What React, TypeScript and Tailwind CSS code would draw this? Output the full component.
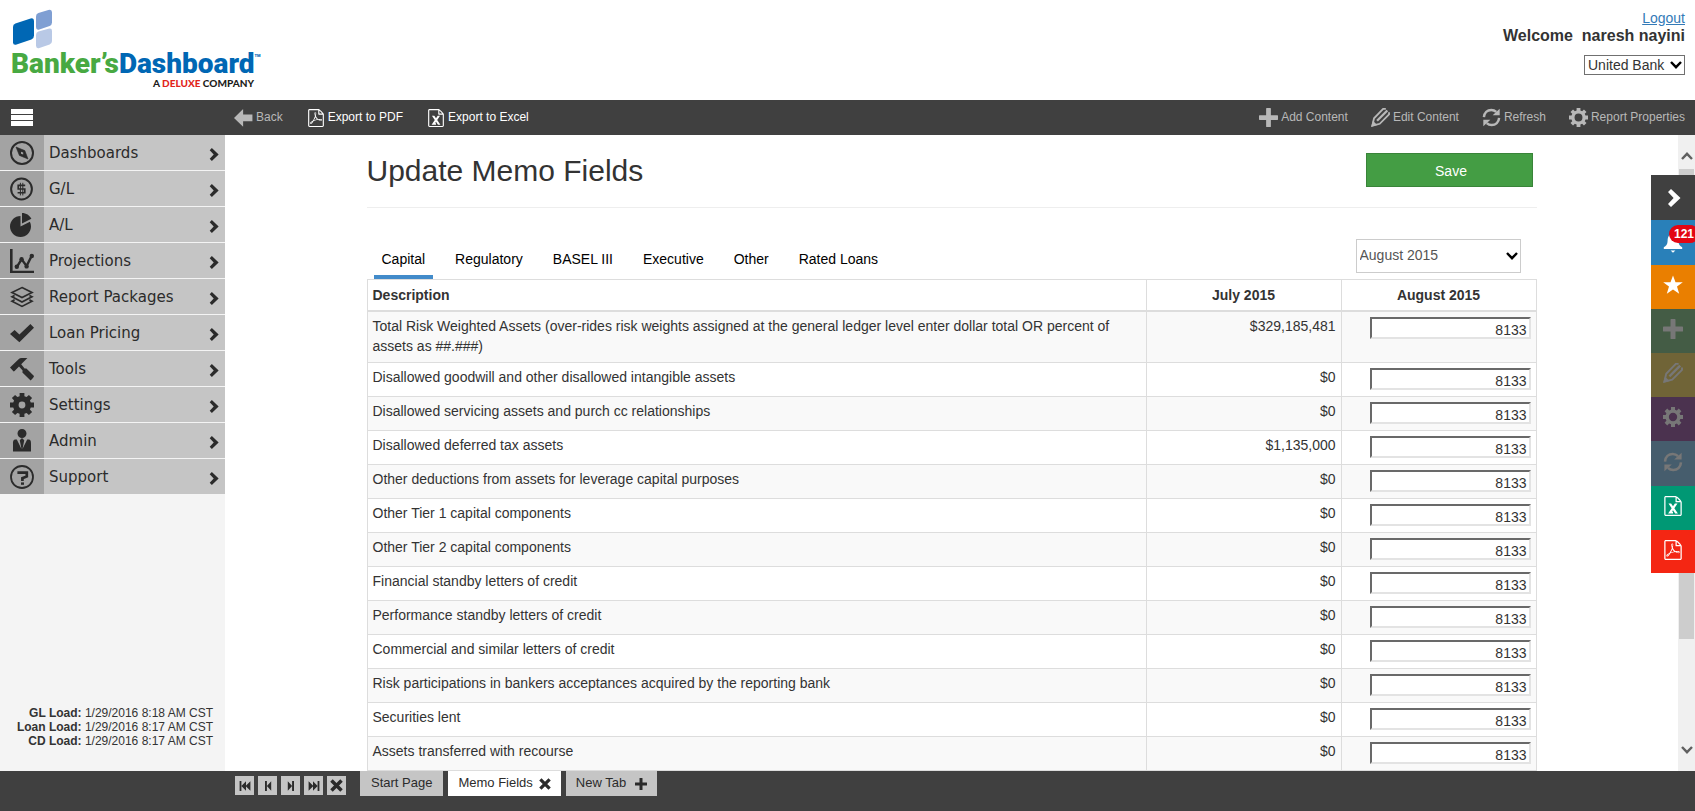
import type { ReactNode } from "react";
import { ImPieChart, ImUserTie, ImFilePdf, ImFileExcel, ImPlus } from "react-icons/im";

type IconProps = { className?: string };

function CompassIcon({ className }: IconProps) {
  return (
    <svg viewBox="0 0 24 24" className={className} fill="none" stroke="currentColor">
      <circle cx="12" cy="12" r="11" strokeWidth="2" />
      <path d="M6 6 L14.8 9.6 L18 18 L9.4 14.4 Z" fill="currentColor" strokeWidth="0.6" />
      <path d="M11 10.8 L13.2 11.4 L13.2 13.4 L11 12.8 Z" fill="#a3a3a3" stroke="none" />
    </svg>
  );
}

function DollarIcon({ className }: IconProps) {
  return (
    <svg viewBox="0 0 24 24" className={className} fill="none" stroke="currentColor">
      <circle cx="11.5" cy="12" r="10.4" strokeWidth="2" />
      <path d="M15.2 8.4 H8.2 V12 H14.8 V15.8 H7.6" strokeWidth="1.6" />
      <path d="M10.4 5.8 V18.4 M12.8 5.8 V18.4" strokeWidth="1" />
    </svg>
  );
}

function TrendIcon({ className }: IconProps) {
  return (
    <svg viewBox="0 0 24 24" className={className} fill="none" stroke="currentColor">
      <path d="M1.3 0 V23 H24" strokeWidth="2.6" />
      <path d="M7 17.6 L11.6 10.4 L16.6 17 L21.6 7" strokeWidth="2.4" />
      <g fill="currentColor" stroke="none">
        <circle cx="6.8" cy="17.8" r="2.2" />
        <circle cx="11.6" cy="10.2" r="2.2" />
        <circle cx="16.6" cy="17.4" r="2.2" />
        <circle cx="21.8" cy="7" r="2.2" />
      </g>
    </svg>
  );
}

function LayersIcon({ className }: IconProps) {
  return (
    <svg viewBox="0 0 24 24" className={className} fill="none" stroke="currentColor" strokeWidth="1.7">
      <path d="M12 2.6 L22 7.6 L12 12.6 L2 7.6 Z" />
      <path d="M4.6 10.4 L2 11.8 L12 17 L22 11.8 L19.4 10.4" />
      <path d="M4.6 14.8 L2 16.2 L12 21.4 L22 16.2 L19.4 14.8" />
    </svg>
  );
}

function CheckIcon({ className }: IconProps) {
  return (
    <svg viewBox="0 0 24 24" className={className} fill="currentColor">
      <path d="M0 13 L4.6 9 L9.4 13.6 L20.4 3 L24 6.8 L9.4 21.2 Z" />
    </svg>
  );
}

function HammerIcon({ className }: IconProps) {
  return (
    <svg viewBox="0 0 24 24" className={className} fill="currentColor">
      <path d="M0 10.6 L8.6 2.2 Q9.8 1 11.6 1 H17.4 L11.2 7.2 L14.6 11.4 L16.4 11.6 L24 19 Q24 20.4 20.6 23.4 L12.4 15.6 L12.6 13.4 L9 9.6 L4.6 14 L3.6 14.4 Z" />
    </svg>
  );
}

function GearIcon({ className, open = false }: IconProps & { open?: boolean }) {
  const teeth =
    "M9.6 0 H14.4 V3.2 L16.6 4.1 L18.9 1.9 L22.1 5.1 L19.9 7.4 L20.8 9.6 H24 V14.4 H20.8 L19.9 16.6 L22.1 18.9 L18.9 22.1 L16.6 19.9 L14.4 20.8 V24 H9.6 V20.8 L7.4 19.9 L5.1 22.1 L1.9 18.9 L4.1 16.6 L3.2 14.4 H0 V9.6 H3.2 L4.1 7.4 L1.9 5.1 L5.1 1.9 L7.4 4.1 L9.6 3.2 Z ";
  const hole = open ? "M12 7 A5 5 0 1 0 12 17 A5 5 0 1 0 12 7 Z" : "M12 8.6 A3.4 3.4 0 1 0 12 15.4 A3.4 3.4 0 1 0 12 8.6 Z";
  return (
    <svg viewBox="0 0 24 24" className={className} fill="currentColor">
      <path fillRule="evenodd" d={teeth + hole} />
    </svg>
  );
}

function QuestionIcon({ className }: IconProps) {
  return (
    <svg viewBox="0 0 24 24" className={className} fill="none" stroke="currentColor">
      <circle cx="12" cy="12" r="11" strokeWidth="1.8" />
      <path d="M7.4 7.6 H16.8 V11.4 L12.4 13.2 V16" strokeWidth="2.7" />
      <path d="M11 17.4 h3 v2.4 h-3 Z" fill="currentColor" stroke="none" />
    </svg>
  );
}

function ChevronIcon({ className }: IconProps) {
  return (
    <svg viewBox="0 0 14 18" className={className} fill="currentColor">
      <path d="M1 3 L4 0 L13.5 9 L4 18 L1 15 L6.6 9 Z" />
    </svg>
  );
}

function CaretIcon({ className }: IconProps) {
  return (
    <svg viewBox="0 0 12 8" className={className} fill="none" stroke="currentColor" strokeWidth="2.4">
      <path d="M1 1 L6 6.2 L11 1" />
    </svg>
  );
}

function BackIcon({ className }: IconProps) {
  return (
    <svg viewBox="0 0 20 20" className={className} fill="currentColor">
      <path d="M0 10 L9.6 0.6 V6.2 H19.4 V13.4 H9.6 V19.2 Z" />
    </svg>
  );
}

function PencilIcon({ className }: IconProps) {
  return (
    <svg viewBox="0 0 20 20" className={className} fill="none" stroke="currentColor" strokeWidth="1.9">
      <path d="M15.6 0.9 H12.8 L3.2 10.8 L1.4 18.6 L9.2 16.6 L19 6.8 V4.6" />
      <path d="M17.2 2.6 L6.4 13.4" strokeWidth="2.4" />
      <path d="M2 13.4 L6.6 18 L0.2 19.8 Z" fill="currentColor" stroke="none" />
    </svg>
  );
}

function RefreshIcon({ className }: IconProps) {
  return (
    <svg viewBox="0 0 20 20" className={className} fill="none" stroke="currentColor" strokeWidth="2.6">
      <path d="M2 9.6 C2.4 4.8 5.6 2 9.8 2 C12 2 13.6 2.8 15 4.2" />
      <path d="M18 10.4 C17.6 15.2 14.4 18 10.2 18 C8 18 6.4 17.2 5 15.8" />
      <path d="M18.6 0.8 V7.6 H11.2 Z" fill="currentColor" stroke="none" />
      <path d="M1.4 19.2 V12.4 H8.8 Z" fill="currentColor" stroke="none" />
    </svg>
  );
}

function StarIcon({ className }: IconProps) {
  return (
    <svg viewBox="0 0 20 20" className={className} fill="currentColor">
      <path d="M10 0.4 L12.5 7.2 H19.8 L14 11.6 L16.2 18.8 L10 14.6 L3.8 18.8 L6 11.6 L0.2 7.2 H7.5 Z" />
    </svg>
  );
}

function BellIcon({ className }: IconProps) {
  return (
    <svg viewBox="0 0 20 20" className={className} fill="currentColor">
      <path d="M10 1 C14 1 15.4 4 15.4 8 C15.4 11.6 17 13 19.2 14.2 V16 H0.8 V14.2 C3 13 4.6 11.6 4.6 8 C4.6 4 6 1 10 1 Z M7.6 17.4 H12.4 L10 19.8 Z" />
    </svg>
  );
}

function CrossIcon({ className }: IconProps) {
  return (
    <svg viewBox="0 0 14 14" className={className} stroke="currentColor" strokeWidth="3.8">
      <path d="M1.6 1.6 L12.4 12.4 M12.4 1.6 L1.6 12.4" />
    </svg>
  );
}

function SkipIcon({ double = false, flip = false }: { double?: boolean; flip?: boolean }) {
  return (
    <svg viewBox="0 0 12 10" className={flip ? "h-[10px] w-3 -scale-x-100" : "h-[10px] w-3"} fill="currentColor">
      {double ? <path d="M0.6 0 h1.8 v10 h-1.8 Z M2.4 5 L7 0.2 V9.8 Z M6.6 5 L11.4 0.2 V9.8 Z" /> : <path d="M3 0 h1.9 v10 h-1.9 Z M4.9 5 L9.2 0.2 V9.8 Z" />}
    </svg>
  );
}

function Logo() {
  return (
    <a href="#home" aria-label="Banker's Dashboard" className="block pl-[11px] pt-2">
      <svg viewBox="0 0 42 42" className="h-[42px] w-[42px]">
        <path d="M2 18.8 Q2 16.4 4.4 15.4 L19.6 10.4 Q23 9.4 23 12.8 V27.6 Q23 30.6 20.4 31.6 L5.6 36.6 Q2 37.6 2 34.2 Z" fill="#0067b4" />
        <path d="M25 8.4 Q25 6 27.4 5 L37.4 2 Q41 1 41 4.4 V14.6 Q41 17 38.6 18 L28.4 21.4 Q25 22.4 25 19 Z" fill="#7f9fd3" />
        <path d="M25 26.8 Q25 24.4 27.4 23.6 L37.4 20.8 Q41 19.8 41 23 V33 Q41 35.6 38.6 36.6 L28.4 40 Q25 41 25 37.6 Z" fill="#b9c9e6" />
      </svg>
      <div className="flex h-[26px] items-start font-[Roboto,'Liberation_Sans',sans-serif] text-[28px] leading-7 font-black">
        <span className="text-[#48a942]">Banker’s</span>
        <span className="text-[#0067b4]">Dashboard</span>
        <span className="text-[4px] leading-3 text-[#0067b4]">TM</span>
      </div>
      <p className="w-[243px] text-right font-[Lato,sans-serif] text-[10px] leading-[14px] font-black text-[#1d1d1b]">
        A <span className="text-[#e1251b]">DELUXE</span> COMPANY
      </p>
    </a>
  );
}

const menu: { label: string; icon: ReactNode }[] = [
  { label: "Dashboards", icon: <CompassIcon className="size-6" /> },
  { label: "G/L", icon: <DollarIcon className="size-6" /> },
  { label: "A/L", icon: <ImPieChart className="size-6" /> },
  { label: "Projections", icon: <TrendIcon className="size-6" /> },
  { label: "Report Packages", icon: <LayersIcon className="size-6" /> },
  { label: "Loan Pricing", icon: <CheckIcon className="size-6" /> },
  { label: "Tools", icon: <HammerIcon className="size-6" /> },
  { label: "Settings", icon: <GearIcon className="size-6" /> },
  { label: "Admin", icon: <ImUserTie className="size-6" /> },
  { label: "Support", icon: <QuestionIcon className="size-6" /> },
];

const loads = [
  ["GL Load:", "1/29/2016 8:18 AM CST"],
  ["Loan Load:", "1/29/2016 8:17 AM CST"],
  ["CD Load:", "1/29/2016 8:17 AM CST"],
];

const tabs = ["Capital", "Regulatory", "BASEL III", "Executive", "Other", "Rated Loans"];

const rows = [
  ["Total Risk Weighted Assets (over-rides risk weights assigned at the general ledger level enter dollar total OR percent of assets as ##.###)", "$329,185,481"],
  ["Disallowed goodwill and other disallowed intangible assets", "$0"],
  ["Disallowed servicing assets and purch cc relationships", "$0"],
  ["Disallowed deferred tax assets", "$1,135,000"],
  ["Other deductions from assets for leverage capital purposes", "$0"],
  ["Other Tier 1 capital components", "$0"],
  ["Other Tier 2 capital components", "$0"],
  ["Financial standby letters of credit", "$0"],
  ["Performance standby letters of credit", "$0"],
  ["Commercial and similar letters of credit", "$0"],
  ["Risk participations in bankers acceptances acquired by the reporting bank", "$0"],
  ["Securities lent", "$0"],
  ["Assets transferred with recourse", "$0"],
];

const quickActions: { label: string; style: string; icon: ReactNode }[] = [
  { label: "Collapse", style: "h-[45px] bg-[#404040] text-white pl-0.5", icon: <ChevronIcon className="h-[18px] w-[14px]" /> },
  { label: "Notifications", style: "h-[45px] bg-[#2980b9] text-white", icon: <BellIcon className="size-5" /> },
  { label: "Favorites", style: "h-11 bg-[#ea7f00] pb-1 text-white", icon: <StarIcon className="size-5" /> },
  { label: "Add content", style: "h-11 bg-[#445c45] pb-1 text-[#777]", icon: <ImPlus className="size-5" /> },
  { label: "Edit content", style: "h-11 bg-[#706437] pb-1 text-[#777]", icon: <PencilIcon className="size-5" /> },
  { label: "Report properties", style: "h-11 bg-[#4b324f] pb-1 text-[#777]", icon: <GearIcon open className="size-5" /> },
  { label: "Refresh", style: "h-[45px] bg-[#465d6d] pb-1 text-[#777]", icon: <RefreshIcon className="size-5" /> },
  { label: "Export to Excel", style: "h-11 bg-[#009874] pb-1 text-white", icon: <ImFileExcel className="size-5" /> },
  { label: "Export to PDF", style: "h-[43px] bg-[#f42613] pb-1 text-white", icon: <ImFilePdf className="size-5" /> },
];

function ToolButton({ icon, label, active = false }: { icon: ReactNode; label: string; active?: boolean }) {
  return (
    <button type="button" className={active ? "flex items-center gap-[3px] text-white" : "flex items-center gap-[3px] text-[#b8b8b8]"}>
      {icon}
      <span className="pb-0.5 leading-4">{label}</span>
    </button>
  );
}

function PagerButton({ label, children }: { label: string; children: ReactNode }) {
  return (
    <button type="button" aria-label={label} className="flex size-[19px] items-center justify-center bg-[#c5c5c5]">
      {children}
    </button>
  );
}

export default function App() {
  return (
    <div className="relative flex h-screen flex-col overflow-hidden bg-white font-['Liberation_Sans',Arial,sans-serif] text-sm text-[#333]">
      <header className="flex h-[100px] shrink-0 justify-between">
        <Logo />
        <div className="flex flex-col items-end pr-2.5 pt-2">
          <a href="#logout" className="leading-5 text-[#337ab7] underline">Logout</a>
          <p className="text-base leading-4 font-bold whitespace-pre">Welcome  naresh nayini</p>
          <div className="relative mt-[11px]">
            <select aria-label="Bank" className="h-5 w-[101px] appearance-none border border-[#707070] bg-white pl-[3px] leading-4">
              <option>United Bank</option>
            </select>
            <CaretIcon className="pointer-events-none absolute top-1.5 right-[3px] h-2 w-3 text-black" />
          </div>
        </div>
      </header>

      <div className="flex h-[35px] shrink-0 items-center justify-between bg-[#404040] pr-2.5 text-xs">
        <div className="flex items-center gap-6">
          <button type="button" aria-label="Toggle menu" className="ml-[11px] mr-[177px] flex w-[22px] flex-col gap-px">
            <span className="h-[5px] bg-white" />
            <span className="h-[5px] bg-white" />
            <span className="h-[5px] bg-white" />
          </button>
          <ToolButton icon={<BackIcon className="h-5 w-[19px]" />} label="Back" />
          <ToolButton active icon={<ImFilePdf className="h-5 w-[18px]" />} label="Export to PDF" />
          <ToolButton active icon={<ImFileExcel className="h-5 w-[18px]" />} label="Export to Excel" />
        </div>
        <div className="flex items-center gap-[23px]">
          <ToolButton icon={<ImPlus className="size-[19px]" />} label="Add Content" />
          <ToolButton icon={<PencilIcon className="size-[19px]" />} label="Edit Content" />
          <ToolButton icon={<RefreshIcon className="size-[19px]" />} label="Refresh" />
          <ToolButton icon={<GearIcon open className="size-[19px]" />} label="Report Properties" />
        </div>
      </div>

      <div className="flex min-h-0 flex-1">
        <aside className="flex w-[225px] shrink-0 flex-col justify-between bg-[#f4f4f4]">
          <nav className="flex flex-col gap-px">
            {menu.map((item) => (
              <a key={item.label} href="#menu" className="flex h-[35px] items-center bg-[#c5c5c5] pr-1.5 font-['DejaVu_Sans',Verdana,sans-serif] text-[15px] text-[#2b2b2b]">
                <span className="flex h-full w-11 items-center justify-center bg-[#a3a3a3]">{item.icon}</span>
                <span className="flex-1 pt-0.5 pl-[5px]">{item.label}</span>
                <ChevronIcon className="mt-1 h-[13px] w-2.5" />
              </a>
            ))}
          </nav>
          <div className="pr-3 pb-[23px] text-right text-xs leading-[14px]">
            {loads.map(([name, time]) => (
              <p key={name}>
                <b>{name}</b> {time}
              </p>
            ))}
          </div>
        </aside>

        <main className="min-w-0 flex-1 overflow-hidden">
          <div className="mx-auto max-w-[1170px]">
            <div className="flex h-[73px] items-start justify-between border-b border-[#eee] pr-1">
              <h1 className="pt-[18px] text-[30px] leading-9">Update Memo Fields</h1>
              <button type="button" className="mt-[18px] h-[34px] w-[167px] border border-[#398439] bg-[#449d44] pt-0.5 pl-1 text-white">
                Save
              </button>
            </div>
            <div className="flex h-[71px] items-end justify-between pr-4">
              <div role="tablist" className="flex gap-3.5 pl-[7px] text-black">
                {tabs.map((tab, i) => (
                  <button
                    key={tab}
                    type="button"
                    role="tab"
                    aria-selected={i === 0}
                    className={i === 0 ? "border-b-4 border-[#428bca] px-2 pb-1.5 leading-5" : "border-b-4 border-transparent px-2 pb-1.5 leading-5"}
                  >
                    {tab}
                  </button>
                ))}
              </div>
              <div className="relative mb-1.5">
                <select aria-label="Period" className="h-[34px] w-[165px] appearance-none border border-[#ccc] bg-white pb-0.5 pl-[3px] text-[#555]">
                  <option>August 2015</option>
                </select>
                <CaretIcon className="pointer-events-none absolute top-[13px] right-[3px] h-2 w-3 text-black" />
              </div>
            </div>
            <table className="w-full table-fixed border-collapse border border-[#ddd] leading-5">
              <thead>
                <tr className="border-b-2 border-[#ddd]">
                  <th className="p-[5px] text-left">Description</th>
                  <th className="w-[195px] border-l border-[#ddd] p-[5px]">July 2015</th>
                  <th className="w-[195px] border-l border-[#ddd] p-[5px]">August 2015</th>
                </tr>
              </thead>
              <tbody>
                {rows.map(([name, amount], i) => (
                  <tr key={name} className="h-[34px] border-b border-[#ddd] align-top odd:bg-[#f9f9f9]">
                    <td className="px-[5px] pt-1 pb-1.5">
                      <label htmlFor={`memo-${i}`}>{name}</label>
                    </td>
                    <td className="border-l border-[#ddd] px-[5px] pt-1 pb-1.5 text-right">{amount}</td>
                    <td className="border-l border-[#ddd] p-[5px]">
                      <input
                        id={`memo-${i}`}
                        defaultValue="8133"
                        className="ml-auto block h-[22px] w-[161px] border-2 border-t-[#696969] border-r-[#e3e3e3] border-b-[#e3e3e3] border-l-[#696969] bg-white pt-1 pr-0.5 text-right"
                      />
                    </td>
                  </tr>
                ))}
              </tbody>
            </table>
          </div>
        </main>

        <div aria-hidden="true" className="flex w-[17px] shrink-0 flex-col items-center bg-[#f0f0f0] text-[#606060]">
          <CaretIcon className="mt-[17px] mb-[9px] h-2 w-3 shrink-0 rotate-180" />
          <div className="h-[470px] w-[15px] bg-[#cdcdcd]" />
          <CaretIcon className="mt-auto mb-[17px] h-2 w-3 shrink-0" />
        </div>
      </div>

      <footer className="flex h-10 shrink-0 items-start bg-[#404040] pl-[235px] text-[13px] text-[#2b2b2b]">
        <div className="mr-3.5 flex gap-1 pt-[5px]">
          <PagerButton label="First tab"><SkipIcon double /></PagerButton>
          <PagerButton label="Previous tab"><SkipIcon /></PagerButton>
          <PagerButton label="Next tab"><SkipIcon flip /></PagerButton>
          <PagerButton label="Last tab"><SkipIcon double flip /></PagerButton>
          <PagerButton label="Close all tabs"><CrossIcon className="size-[13px]" /></PagerButton>
        </div>
        <div className="flex gap-[5px]">
          <button type="button" className="h-[25px] bg-[#c5c5c5] px-[11px]">Start Page</button>
          <button type="button" className="flex h-[25px] items-center gap-1.5 bg-white px-[10px]">
            Memo Fields <CrossIcon className="size-3" />
          </button>
          <button type="button" className="flex h-[25px] items-center gap-[9px] bg-[#c5c5c5] px-[10px]">
            New Tab <ImPlus className="size-3" />
          </button>
        </div>
      </footer>

      <div className="absolute top-[175px] right-0 flex w-11 flex-col overflow-hidden">
        {quickActions.map((action) => (
          <button key={action.label} type="button" aria-label={action.label} className={`relative flex shrink-0 items-center justify-center ${action.style}`}>
            {action.icon}
            {action.label === "Notifications" && (
              <span className="absolute top-[5px] left-[18px] rounded-full bg-[#e30613] px-[5px] text-xs leading-[18px] font-bold text-white">121</span>
            )}
          </button>
        ))}
      </div>
    </div>
  );
}
